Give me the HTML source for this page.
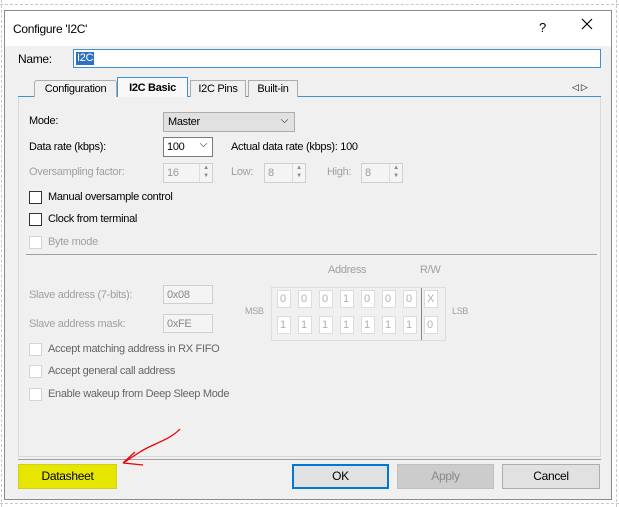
<!DOCTYPE html>
<html><head><style>
*{box-sizing:border-box;margin:0;padding:0}
body{width:619px;height:507px;background:#fff;font-family:"Liberation Sans",sans-serif;font-size:11px;color:#000;position:relative;overflow:hidden;letter-spacing:-0.3px}
.a{position:absolute}
.g{color:#a0a0a0}
.box{position:absolute;border:1px solid #adadad;background:#fff}
.dis{border-color:#cfcfcf;background:#f4f4f4;color:#9a9a9a}
.cb{position:absolute;width:13px;height:13px;border:1px solid #333;background:#fff}
.cb.d{border-color:#d5d5d5}
.cell{position:absolute;width:14px;height:18px;border:1px solid #dcdcdc;background:#fff;color:#b0b0b0;font-size:11px;padding-left:2px;line-height:16px}
.btn{position:absolute;top:464px;height:25px;border:1px solid #adadad;background:#e1e1e1;text-align:center;line-height:23px;font-size:12px}
.spin{position:absolute;right:0;top:0;width:13px;height:100%;border-left:1px solid #ddd;font-size:6px;color:#888;text-align:center;line-height:8px}
</style></head><body>
<div class="a" style="left:0;top:4px;width:619px;border-top:1px dashed #c8c8c8"></div>
<div class="a" style="left:0;top:503px;width:619px;border-top:1px dashed #c8c8c8"></div>
<div class="a" style="left:1px;top:0;height:507px;border-left:1px dashed #c8c8c8"></div>
<div class="a" style="left:616px;top:0;height:507px;border-left:1px dashed #c8c8c8"></div>
<div class="a" style="left:4px;top:10px;width:608px;height:490px;border:1px solid #8a8a8a;background:#f0f0f0"></div>
<div class="a" style="left:5px;top:11px;width:606px;height:35px;background:#fff"></div>
<div class="a" style="left:13px;top:22px;font-size:12px">Configure 'I2C'</div>
<div class="a" style="left:539px;top:20px;font-size:13px">?</div>
<svg class="a" style="left:581px;top:18px" width="12" height="12"><path d="M1 1L11 11M11 1L1 11" stroke="#000" stroke-width="1.2"/></svg>
<div class="a" style="left:18px;top:52px;font-size:12px">Name:</div>
<div class="a" style="left:73px;top:49px;width:528px;height:19px;border:1px solid #3d8fd6;background:#fff"></div>
<div class="a" style="left:76px;top:52px;height:13px;background:#2f6fc4;color:#fff;padding:0 1px;line-height:13px">I2C</div>
<div class="a" style="left:18px;top:96px;width:583px;border-top:1px solid #3d8fd6"></div>
<div class="a" style="left:34px;top:80px;width:83px;height:17px;border:1px solid #adadad;border-bottom:none;background:#f0f0f0;border-radius:3px 3px 0 0;text-align:center;line-height:16px">Configuration</div>
<div class="a" style="left:190px;top:80px;width:56px;height:17px;border:1px solid #adadad;border-bottom:none;background:#f0f0f0;text-align:center;line-height:16px">I2C Pins</div>
<div class="a" style="left:248px;top:80px;width:50px;height:17px;border:1px solid #adadad;border-bottom:none;background:#f0f0f0;text-align:center;line-height:16px">Built-in</div>
<div class="a" style="left:117px;top:77px;width:71px;height:21px;border:1px solid #3d8fd6;border-bottom:none;background:#f8f8f8;text-align:center;line-height:21px;font-weight:bold">I2C Basic</div>
<div class="a" style="left:572px;top:82px;font-size:9px">◁ ▷</div>
<div class="a" style="left:18px;top:97px;width:583px;height:360px;border:1px solid #dadada;border-top:none;background:#f0f0f0"></div>
<div class="a" style="left:29px;top:115px">Mode:</div>
<div class="box" style="left:163px;top:112px;width:132px;height:20px;background:#e1e1e1;padding:3px 4px">Master<span style="position:absolute;right:6px;top:2px;font-size:10px">⌵</span></div>
<div class="a" style="left:29px;top:141px">Data rate (kbps):</div>
<div class="box" style="left:163px;top:137px;width:50px;height:20px;border-color:#7a7a7a;padding:3px 3px">100<span style="position:absolute;right:5px;top:1px;font-size:10px">⌵</span></div>
<div class="a" style="left:231px;top:141px">Actual data rate (kbps): 100</div>
<div class="a g" style="left:29px;top:166px">Oversampling factor:</div>
<div class="box dis" style="left:163px;top:163px;width:50px;height:20px;padding:3px">16<div class="spin">▲<br>▼</div></div>
<div class="a g" style="left:231px;top:166px">Low:</div>
<div class="box dis" style="left:264px;top:163px;width:42px;height:20px;padding:3px">8<div class="spin">▲<br>▼</div></div>
<div class="a g" style="left:327px;top:166px">High:</div>
<div class="box dis" style="left:361px;top:163px;width:42px;height:20px;padding:3px">8<div class="spin">▲<br>▼</div></div>
<div class="cb" style="left:29px;top:191px"></div><div class="a" style="left:48px;top:191px">Manual oversample control</div>
<div class="cb" style="left:29px;top:213px"></div><div class="a" style="left:48px;top:213px">Clock from terminal</div>
<div class="cb d" style="left:29px;top:236px"></div><div class="a g" style="left:48px;top:236px">Byte mode</div>
<div class="a" style="left:26px;top:254px;width:571px;border-top:1px solid #a0a0a0"></div>
<div class="a g" style="left:328px;top:264px">Address</div>
<div class="a g" style="left:420px;top:264px">R/W</div>
<div class="a g" style="left:29px;top:289px">Slave address (7-bits):</div>
<div class="box dis" style="left:163px;top:285px;width:50px;height:19px;padding:3px;color:#888">0x08</div>
<div class="a g" style="left:29px;top:318px">Slave address mask:</div>
<div class="box dis" style="left:163px;top:314px;width:50px;height:19px;padding:3px;color:#888">0xFE</div>
<div class="a g" style="left:245px;top:306px;font-size:9px">MSB</div>
<div class="a g" style="left:452px;top:306px;font-size:9px">LSB</div>
<div class="a" style="left:271px;top:287px;width:175px;height:54px;border:1px solid #dcdcdc;background:#f0f0f0"></div>
<div class="a" style="left:421px;top:288px;height:52px;border-left:1px solid #888"></div>
<div class="cell" style="left:277px;top:290px">0</div><div class="cell" style="left:298px;top:290px">0</div><div class="cell" style="left:319px;top:290px">0</div><div class="cell" style="left:340px;top:290px">1</div><div class="cell" style="left:361px;top:290px">0</div><div class="cell" style="left:382px;top:290px">0</div><div class="cell" style="left:403px;top:290px">0</div><div class="cell" style="left:424px;top:290px">X</div>
<div class="cell" style="left:277px;top:316px">1</div><div class="cell" style="left:298px;top:316px">1</div><div class="cell" style="left:319px;top:316px">1</div><div class="cell" style="left:340px;top:316px">1</div><div class="cell" style="left:361px;top:316px">1</div><div class="cell" style="left:382px;top:316px">1</div><div class="cell" style="left:403px;top:316px">1</div><div class="cell" style="left:424px;top:316px">0</div>
<div class="cb d" style="left:29px;top:343px"></div><div class="a" style="left:48px;top:343px;color:#666">Accept matching address in RX FIFO</div>
<div class="cb d" style="left:29px;top:365px"></div><div class="a" style="left:48px;top:365px;color:#666">Accept general call address</div>
<div class="cb d" style="left:29px;top:388px"></div><div class="a" style="left:48px;top:388px;color:#666">Enable wakeup from Deep Sleep Mode</div>
<div class="a" style="left:18px;top:459px;width:583px;border-top:1px solid #a0a0a0"></div>
<div class="btn" style="left:18px;width:99px;background:#e6e600;border-color:#d0d020">Datasheet</div>
<div class="btn" style="left:292px;width:97px;border:2px solid #0078d7;line-height:21px">OK</div>
<div class="btn" style="left:397px;width:97px;background:#ccc;border-color:#bfbfbf;color:#888">Apply</div>
<div class="btn" style="left:502px;width:98px">Cancel</div>
<svg class="a" style="left:0;top:0" width="619" height="507"><path d="M180 429 C170 440 150 445 140 452 C132 457 128 460 123 463 M123 463 L135 452 M123 463 L143 465" stroke="#e00" stroke-width="1.3" fill="none"/></svg>
</body></html>
